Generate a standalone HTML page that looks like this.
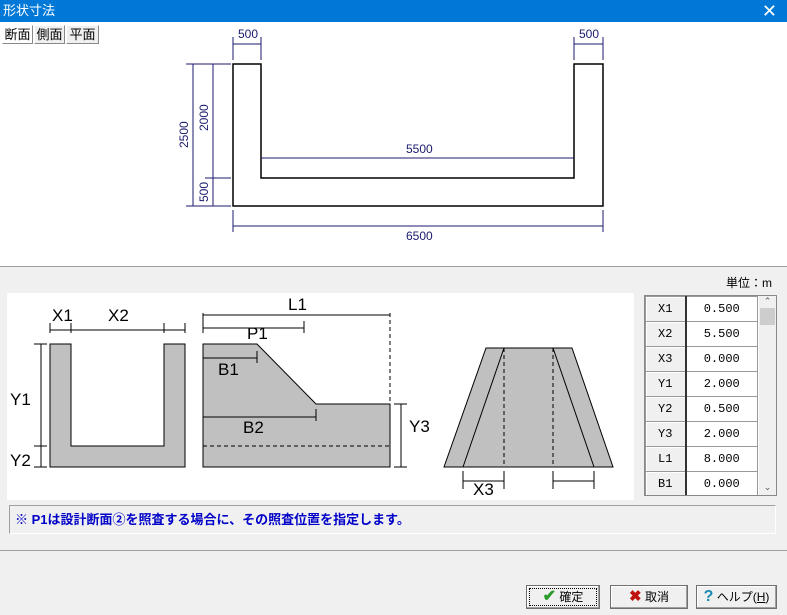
<!DOCTYPE html>
<html><head><meta charset="utf-8"><style>
*{margin:0;padding:0;box-sizing:border-box}
body{width:787px;height:615px;background:#f0f0f0;font-family:"Liberation Sans","Noto Sans CJK JP",sans-serif;position:relative;overflow:hidden;font-size:12px}
.a{position:absolute}
.tab{position:absolute;top:25px;height:19px;border:1px solid #888;background:#f0f0f0;font-size:13px;line-height:17px;text-align:center;border-top-color:#fff;border-left-color:#fff}
.btn{position:absolute;top:585px;height:24px;border:1px solid #707070;background:#f0f0f0;font-size:12px;line-height:22px;text-align:center;box-shadow:inset -1px -1px #a0a0a0,inset 1px 1px #fff}
table{border-collapse:collapse}
td{height:25px;border:1px solid #999;font-family:"Liberation Mono",monospace;font-size:12px;text-align:center}
td.h{width:40px;background:#f0f0f0;border-right:2px solid #333;box-shadow:inset 1px 1px #fff}
td.v{width:72px;background:#fff}
</style></head><body>
<div class="a" style="left:0;top:0;width:787px;height:22px;background:#0078d7;color:#fff;font-size:13px;line-height:22px;padding-left:3px">形状寸法</div>
<div class="a" style="right:10px;top:0;color:#fff;font-size:18px;line-height:22px">✕</div>
<div class="a" style="left:0;top:22px;width:787px;height:244px;background:#fff"></div>
<div class="a" style="left:0;top:266px;width:787px;height:1px;background:#a0a0a0"></div>
<div class="tab" style="left:2px;width:31px;background:#fff">断面</div>
<div class="tab" style="left:34px;width:31px">側面</div>
<div class="tab" style="left:66px;width:33px">平面</div>
<svg class="a" style="left:0;top:0" width="787" height="270">
<g fill="none" stroke="#000" stroke-width="1.5">
<path d="M233 64V206H603V64H574V178H261V64Z"/>
</g>
<g stroke="#1a1a6e" stroke-width="1" fill="none">
<path d="M233 37V60M261 37V60M574 37V60M603 37V60M233 44H261M574 44H603"/>
<path d="M261 158H574M233 210V232M603 210V232M233 226H603"/>
<path d="M186 64H231M186 206H231M205 178H231M193 64V206M213 64V206"/>
</g>
<g fill="#1a1a6e" font-family="Liberation Sans Narrow,Liberation Sans" font-size="12">
<text x="238" y="38">500</text><text x="579" y="38">500</text>
<text x="406" y="153">5500</text><text x="406" y="240">6500</text>
<text transform="translate(188,148) rotate(-90)">2500</text>
<text transform="translate(208,131) rotate(-90)">2000</text>
<text transform="translate(208,202) rotate(-90)">500</text>
</g>
</svg>
<div class="a" style="left:726px;top:274px;font-size:12px">単位：m</div>
<svg class="a" style="left:7px;top:293px;background:#fff" width="627" height="207">
<g fill="#c0c0c0" stroke="#000" stroke-width="1">
<path d="M43 51H64V153H157V51H178V174H43Z"/>
<path d="M196 51H250L309 111H383V174H196Z"/>
<path d="M479 55H565L606 174H437Z"/>
</g>
<g stroke="#000" fill="none" stroke-width="1">
<path d="M43 30V40M64 30V40M157 30V40M178 30V40M43 37H178"/>
<path d="M27 51H40M27 153H40M27 174H40M34 51V174"/>
<path d="M196 20V40M196 22H383M196 35H297M297 28V40M196 65H250M250 58V70M196 124H309M309 116V128"/>
<path d="M196 153H383" stroke-dasharray="4 3"/>
<path d="M383 20V108" stroke-dasharray="4 3"/>
<path d="M387 111H400M387 174H400M394 111V174"/>
<path d="M497 55V174M546 55V174" stroke-dasharray="4 3"/>
<path d="M456 174L497 55M587 174L546 55"/>
<path d="M456 178V196M497 178V196M546 178V196M587 178V196M456 188H497M546 188H587"/>
</g>
<g font-family="Liberation Sans Narrow,Liberation Sans" font-size="17" fill="#000">
<text x="45" y="28">X1</text><text x="101" y="28">X2</text>
<text x="281" y="17">L1</text><text x="240" y="46">P1</text>
<text x="211" y="82">B1</text><text x="236" y="140">B2</text>
<text x="3" y="112">Y1</text><text x="3" y="173">Y2</text>
<text x="402" y="139">Y3</text><text x="466" y="202">X3</text>
</g>
</svg>
<div class="a" style="left:644px;top:295px;width:133px;height:201px;border:1px solid #888;background:#fff;overflow:hidden">
<table><tr><td class="h">X1</td><td class="v">0.500</td></tr>
<tr><td class="h">X2</td><td class="v">5.500</td></tr>
<tr><td class="h">X3</td><td class="v">0.000</td></tr>
<tr><td class="h">Y1</td><td class="v">2.000</td></tr>
<tr><td class="h">Y2</td><td class="v">0.500</td></tr>
<tr><td class="h">Y3</td><td class="v">2.000</td></tr>
<tr><td class="h">L1</td><td class="v">8.000</td></tr>
<tr><td class="h">B1</td><td class="v">0.000</td></tr></table>
<div class="a" style="right:0;top:0;width:17px;height:199px;background:#f0f0f0"><div style="font-size:9px;text-align:center;color:#555">⌃</div><div style="margin:1px 1px;height:17px;background:#cdcdcd"></div><div class="a" style="bottom:2px;width:17px;text-align:center;font-size:9px;color:#555">⌄</div></div>
</div>
<div class="a" style="left:9px;top:505px;width:767px;height:29px;border:1px solid #a0a0a0;border-right-color:#fff;border-bottom-color:#fff;color:#0000c8;font-weight:bold;font-size:13px;line-height:27px;padding-left:5px">※ P1は設計断面②を照査する場合に、その照査位置を指定します。</div>
<div class="a" style="left:0;top:550px;width:787px;height:1px;background:#a0a0a0"></div>
<div class="btn" style="left:526px;width:74px;outline:1px dotted #000;outline-offset:-4px"><span style="color:#2a9a2a;font-weight:bold;font-size:16px">✔</span> 確定</div>
<div class="btn" style="left:610px;width:78px"><span style="color:#c01010;font-weight:bold;font-size:15px">✖</span> 取消</div>
<div class="btn" style="left:696px;width:81px"><span style="color:#1a8ab0;font-weight:bold;font-size:16px">?</span> ヘルプ(<u>H</u>)</div>
</body></html>
